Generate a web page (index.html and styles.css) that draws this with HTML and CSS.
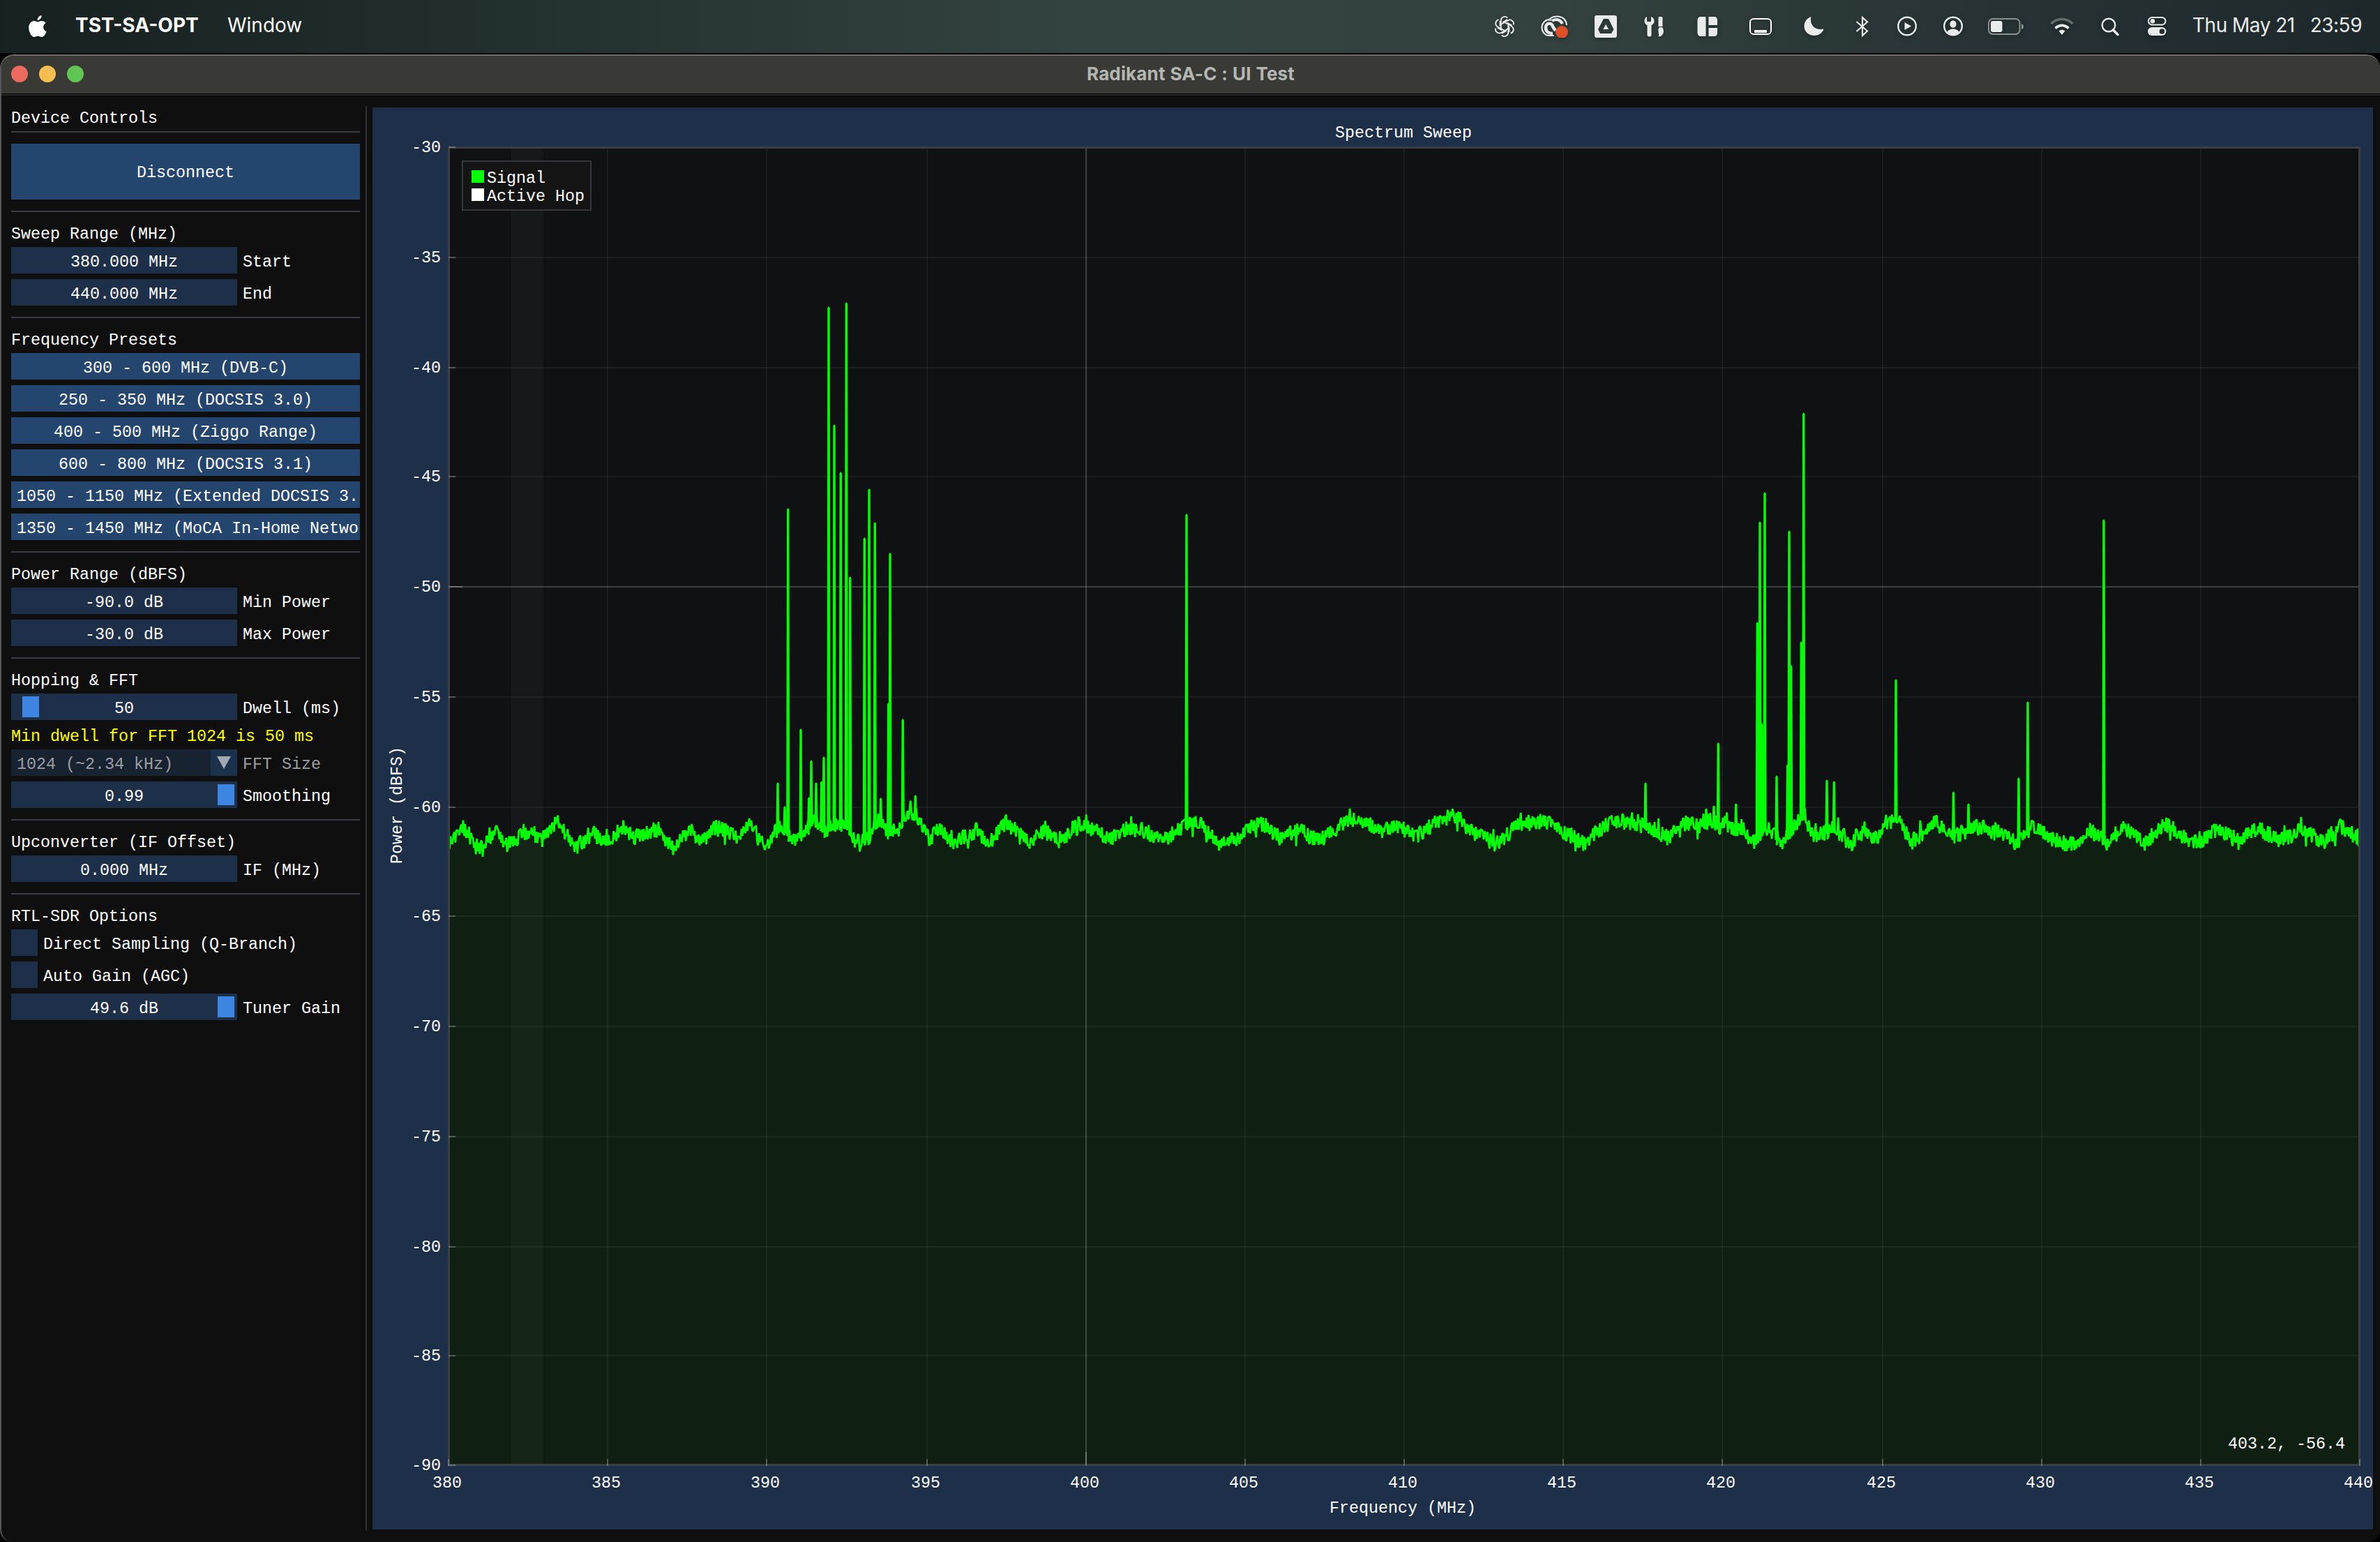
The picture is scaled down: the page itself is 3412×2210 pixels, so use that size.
FILE: index.html
```html
<!DOCTYPE html>
<html lang="en">
<head>
  <meta charset="UTF-8">
  <title>Radikant SA-C : UI Test</title>
  <link rel="stylesheet" href="styles.css">
</head>
<body>
  <!-- System menu bar -->
  <div class="menubar">
    <svg class="ic-apple" width="26" height="32" viewBox="0 0 26 32">
      <path d="M18.6 0c.3 3.300-2.600 7-6 7.100C12.200 3.900 15.300.500 18.600 0zM13 9.300c1.500 0 3-1.400 5.700-1.400 2.300 0 4.500 1.200 5.800 3.100-5 3.200-4.200 10 1.100 12.200-1.500 4.100-4 7.800-6.900 7.800-2.100 0-2.900-1.300-5.400-1.300S9.900 31 7.800 31C4.200 31 .200 23.900.200 18 .200 11.800 3.900 8 7.800 8c2.300 0 3.900 1.300 5.200 1.300z"/>
    </svg>
    <span class="app-name">TST-SA-OPT</span>
    <span class="menu-item">Window</span>
    <div class="status">
      <svg class="ic-knot" width="32" height="32" viewBox="-16 -16 32 32">
        <g fill="none" stroke="#e9ebea" stroke-width="1.900">
          <path id="petal" d="M-5.200 3V-8.500A5.500 5.500 0 0 1 4.200-12.400M4-9.800L-2-6.400V-5"/>
          <use href="#petal" transform="rotate(60)"/>
          <use href="#petal" transform="rotate(120)"/>
          <use href="#petal" transform="rotate(180)"/>
          <use href="#petal" transform="rotate(240)"/>
          <use href="#petal" transform="rotate(300)"/>
        </g>
      </svg>
      <svg class="ic-cloud" width="40" height="32" viewBox="0 0 40 32">
        <g fill="none" stroke="#e9ebea">
          <path stroke-width="2.200" d="M20 29H12A11 11.500 0 0 1 12 6.200c2 0 3 .300 4 .800M13 6.200C18-1 37-1 38 14"/>
          <path stroke-width="4.500" d="M18 26c-3 0-10-1-10-8C8 10 17 10 18 16l4 6"/>
          <path stroke-width="4" d="M17 8c5-4 12-2 15 4"/>
        </g>
        <circle cx="31" cy="24" r="9" fill="#df5027"/>
      </svg>
      <svg class="ic-box" width="32" height="32" viewBox="0 0 32 32">
        <path fill-rule="evenodd" d="M3 0h26a3 3 0 0 1 3 3v26a3 3 0 0 1-3 3H3a3 3 0 0 1-3-3V3a3 3 0 0 1 3-3zM13 5L5 20l3 6h16l3.500-6L20 5zM16.200 13l4 7h-8z"/>
      </svg>
      <svg class="ic-tools" width="30" height="32" viewBox="0 0 30 32">
        <path d="M4 2v7h6V2c3 1 4.500 3.500 4.500 6.500 0 2.500-1.500 4.500-4 5.800V28a3 2.500 0 0 1-6 0V14.300C2 13 .500 11 .500 8.500.500 5.500 1.500 3 4 2zM20.500 4c0-3 6-3 6 0v12h-6zM22 17h4c3 4 2.500 10-1.500 12.500-1.500 1-3 1-4 .500C22.500 26 18 21 22 17z"/>
      </svg>
      <svg class="ic-layout" width="30" height="32" viewBox="0 0 30 32">
        <path d="M5 2h7.500v28H5a4.500 4.500 0 0 1-4.500-4.500v-19A4.500 4.500 0 0 1 5 2zM16.500 2H25a4 4.500 0 0 1 4 4.500V14H16.500zM16.500 18H29v7.500a4 4.500 0 0 1-4 4.500h-8.500z"/>
      </svg>
      <svg class="ic-dock" width="32" height="32" viewBox="0 0 32 32">
        <rect x="1" y="5" width="30" height="22" rx="5" fill="none" stroke="#fff" stroke-width="2"/>
        <rect x="7" y="21" width="18" height="4" rx="1" fill="#fff"/>
      </svg>
      <svg class="ic-moon" width="30" height="32" viewBox="0 0 30 32">
        <path d="M10.500 2C8 11 14 22.500 28.500 19.500 27 25 21.500 29 15 29 7 29 .500 23.500.500 15.500.500 9 4.500 4 10.500 2z"/>
      </svg>
      <svg class="ic-bt" width="20" height="32" viewBox="0 0 20 32">
        <path fill="none" stroke="#e9ebea" stroke-width="2.200" d="M1.500 9L17 22.500 10 29V3l7 6.500L1.500 23"/>
      </svg>
      <svg class="ic-play" width="28" height="32" viewBox="0 0 28 32">
        <circle cx="14" cy="15.500" r="12.800" fill="none" stroke="#e9ebea" stroke-width="2.400"/>
        <path d="M10.500 10l9.500 5.500-9.500 5.500z"/>
      </svg>
      <svg class="ic-user" width="28" height="32" viewBox="0 0 28 32">
        <circle cx="14" cy="15.500" r="12.800" fill="none" stroke="#e9ebea" stroke-width="2.400"/>
        <ellipse cx="14" cy="12.500" rx="4.600" ry="5.300"/>
        <path d="M5.500 24c2-6 15-6 17 0-4 5.500-13 5.500-17 0z"/>
      </svg>
      <svg class="ic-battery" width="52" height="32" viewBox="0 0 52 32">
        <rect x="1" y="5" width="44.500" height="22" rx="6" fill="none" stroke="#8b9391" stroke-width="2"/>
        <rect x="4" y="8" width="16.500" height="16" rx="3"/>
        <path fill="#8b9391" d="M48 12c4 1.500 4 7 0 8z"/>
      </svg>
      <svg class="ic-wifi" width="34" height="32" viewBox="0 0 34 32">
        <g fill="none" stroke-width="3.800">
          <path stroke="#5f6a69" d="M1.500 12.200c9-9 22-9 31 0"/>
          <path stroke="#e9ebea" d="M7.500 18.500c6-5.500 13-5.500 19 0"/>
        </g>
        <path d="M12.500 22.500c3-2.500 6-2.500 9 0L17 28z"/>
      </svg>
      <svg class="ic-search" width="28" height="32" viewBox="0 0 28 32">
        <circle cx="11" cy="14" r="9.300" fill="none" stroke="#e9ebea" stroke-width="2.400"/>
        <path stroke="#e9ebea" stroke-width="3.600" stroke-linecap="round" d="M17.500 21l6.500 6.500"/>
      </svg>
      <svg class="ic-control" width="28" height="32" viewBox="0 0 28 32">
        <rect x="2" y="3" width="24.500" height="10.500" rx="5.200" fill="none" stroke="#e9ebea" stroke-width="2"/>
        <circle cx="8" cy="8.300" r="3.300"/>
        <rect x="1" y="17" width="26.500" height="12" rx="6"/>
        <circle cx="21.500" cy="23" r="3.800" fill="#243031"/>
      </svg>
      <div class="clock"><span>Thu May 21</span><span>23:59</span></div>
    </div>
  </div>

  <div class="window">
    <div class="titlebar">
      <div class="lights">
        <i class="light red"></i><i class="light yellow"></i><i class="light green"></i>
      </div>
      <div class="window-title">Radikant SA-C : UI Test</div>
    </div>

    <div class="content">
      <!-- Left control panel -->
      <div class="panel">
        <div class="text">Device Controls</div>
        <div class="sep first"></div>
        <div class="btn big">Disconnect</div>
        <div class="sep"></div>

        <div class="text">Sweep Range (MHz)</div>
        <div class="row"><div class="field">380.000 MHz</div><div class="label">Start</div></div>
        <div class="row"><div class="field">440.000 MHz</div><div class="label">End</div></div>
        <div class="sep"></div>

        <div class="text">Frequency Presets</div>
        <div class="btn">300 - 600 MHz (DVB-C)</div>
        <div class="btn">250 - 350 MHz (DOCSIS 3.0)</div>
        <div class="btn">400 - 500 MHz (Ziggo Range)</div>
        <div class="btn">600 - 800 MHz (DOCSIS 3.1)</div>
        <div class="btn long">1050 - 1150 MHz (Extended DOCSIS 3.</div>
        <div class="btn long">1350 - 1450 MHz (MoCA In-Home Netwo</div>
        <div class="sep"></div>

        <div class="text">Power Range (dBFS)</div>
        <div class="row"><div class="field">-90.0 dB</div><div class="label">Min Power</div></div>
        <div class="row"><div class="field">-30.0 dB</div><div class="label">Max Power</div></div>
        <div class="sep"></div>

        <div class="text">Hopping &amp; FFT</div>
        <div class="row"><div class="field">50<i class="grab low"></i></div><div class="label">Dwell (ms)</div></div>
        <div class="text warn">Min dwell for FFT 1024 is 50 ms</div>
        <div class="row disabled">
          <div class="combo">
            <div class="combo-value">1024 (~2.34 kHz)</div>
            <div class="combo-arrow"><svg width="20" height="18" viewBox="0 0 20 18"><path d="M0 0h20L10 18z"/></svg></div>
          </div>
          <div class="label">FFT Size</div>
        </div>
        <div class="row"><div class="field">0.99<i class="grab high"></i></div><div class="label">Smoothing</div></div>
        <div class="sep"></div>

        <div class="text">Upconverter (IF Offset)</div>
        <div class="row"><div class="field">0.000 MHz</div><div class="label">IF (MHz)</div></div>
        <div class="sep"></div>

        <div class="text">RTL-SDR Options</div>
        <div class="row"><div class="check"></div><div class="label">Direct Sampling (Q-Branch)</div></div>
        <div class="row"><div class="check"></div><div class="label">Auto Gain (AGC)</div></div>
        <div class="row"><div class="field">49.6 dB<i class="grab high"></i></div><div class="label">Tuner Gain</div></div>
      </div>

      <div class="splitter"></div>

      <svg class="plot" id="plot" width="2868" height="2038" viewBox="534 154 2868 2038">
        <rect class="plot-bg" x="643" y="211" width="2740" height="1889"/>
        <rect class="hop" x="733" y="212" width="46" height="1887"/>
        <g id="grid"></g>
        <polygon class="fill" id="fill"/>
        <polyline class="trace" id="trace"/>
        <rect class="frame" x="643.500" y="211.500" width="2739" height="1888"/>
        <g id="ticks"></g>
        <g class="legend">
          <rect class="legend-box" x="663" y="231" width="184" height="70"/>
          <rect x="676" y="244" width="18" height="18" fill="#0f0"/>
          <rect x="676" y="270" width="18" height="18" fill="#fff"/>
          <text x="698" y="262">Signal</text>
          <text x="698" y="288">Active Hop</text>
        </g>
        <text x="1914" y="196.500">Spectrum Sweep</text>
        <text x="1906" y="2168">Frequency (MHz)</text>
        <text transform="translate(576 1238) rotate(-90)">Power (dBFS)</text>
        <text x="3194" y="2076">403.2, -56.4</text>
      </svg>
    </div>
  </div>

  <script>
    // axis ticks: pixel centres of the grid lines
    var xs = [643, 871, 1099, 1329, 1557, 1785, 2013, 2241, 2469, 2699, 2927, 3155, 3383];
    var ys = [211, 369, 527, 683, 841, 999, 1157, 1313, 1471, 1629, 1787, 1943, 2100];
    var grid = '', ticks = '';

    xs.forEach(function(x, i) {
      var major = i === 4;
      if (i > 0 && i < 12) grid += '<path class="' + (major ? 'major' : 'minor') + '" d="M' + x + ' 212V2099"/>';
      ticks += '<path class="tick" d="M' + x + ' 2101v-' + (major ? 20 : 10) + '"/>';
      ticks += '<text x="' + (x - 23) + '" y="2132">' + (380 + i * 5) + '</text>';
    });
    ys.forEach(function(y, i) {
      var major = i === 4;
      if (i > 0 && i < 12) grid += '<path class="' + (major ? 'major' : 'minor') + '" d="M644 ' + y + 'H3382"/>';
      ticks += '<path class="tick" d="M643 ' + y + 'h' + (major ? 20 : 10) + '"/>';
      ticks += '<text x="590" y="' + (y + 7) + '">' + (-30 - i * 5) + '</text>';
    });
    document.getElementById('grid').innerHTML = grid;
    document.getElementById('ticks').innerHTML = ticks;

    // noise floor: x, y pairs
    var floor = [643,1207, 654,1200, 664,1187, 671,1193, 682,1213, 693,1218, 700,1203, 711,1192, 721,1207, 734,1212,
      750,1193, 764,1193, 775,1205, 786,1193, 798,1177, 811,1193, 825,1213, 836,1207, 846,1188, 863,1208, 875,1203,
      893,1185, 911,1200, 929,1192, 943,1188, 964,1217, 979,1197, 991,1190, 1004,1208, 1025,1187, 1043,1190, 1060,1203,
      1073,1176, 1087,1201, 1100,1209, 1110,1193, 1123,1184, 1137,1204, 1153,1195, 1167,1173, 1180,1190, 1193,1184,
      1217,1184, 1223,1204, 1233,1209, 1247,1198, 1260,1173, 1273,1193, 1287,1190, 1297,1168, 1313,1168, 1323,1187,
      1333,1204, 1345,1187, 1353,1195, 1367,1206, 1380,1201, 1400,1190, 1418,1208, 1443,1178, 1475,1206, 1500,1190,
      1520,1206, 1545,1185, 1570,1188, 1590,1205, 1612,1187, 1640,1190, 1665,1205, 1690,1190, 1716,1176, 1745,1208,
      1775,1200, 1806,1176, 1835,1200, 1865,1190, 1890,1205, 1915,1188, 1945,1170, 1980,1190, 2005,1182, 2030,1200,
      2055,1182, 2083,1166, 2110,1192, 2145,1210, 2175,1182, 2215,1176, 2240,1190, 2270,1208, 2290,1190, 2318,1176,
      2345,1180, 2370,1188, 2390,1200, 2415,1180, 2440,1183, 2453,1176, 2467,1185, 2475,1174, 2483,1189, 2497,1185,
      2507,1203, 2518,1207, 2530,1185, 2540,1194, 2555,1207, 2567,1194, 2577,1178, 2587,1163, 2600,1198, 2613,1196,
      2628,1185, 2640,1198, 2653,1210, 2673,1189, 2690,1201, 2707,1185, 2720,1167, 2730,1185, 2740,1207, 2757,1194,
      2775,1178, 2800,1200, 2830,1185, 2860,1190, 2890,1208, 2915,1182, 2945,1205, 2975,1212, 2995,1190, 3020,1207,
      3045,1185, 3075,1207, 3105,1180, 3145,1210, 3180,1188, 3210,1207, 3235,1187, 3270,1205, 3300,1188, 3330,1207,
      3355,1185, 3383,1203];
    // carriers: x, top y
    var spikes = [1115,1123, 1125,1157, 1129.7,730, 1148,1046, 1159.7,1144, 1163,1091, 1170,1123, 1177.7,1121,
      1181,1086, 1188,441, 1196,610, 1205.3,678, 1213.3,435, 1218.7,828, 1239.3,772, 1246,702, 1254.3,750,
      1262.7,1145, 1273.7,1009, 1276,794, 1294.3,1032, 1312.3,1141, 1701,738, 2359,1123, 2446,1160, 2457,1156,
      2463.3,1066, 2488.7,1153, 2519.3,893, 2523,749, 2525.7,1038, 2530,707, 2547,1113, 2562.7,1097, 2565,762,
      2567.7,955, 2582.3,921, 2585.7,593, 2619,1119, 2629.3,1121, 2718,975, 2800.5,1136, 2822,1153, 2894,1116,
      2907,1007, 3016,746];

    var seed = 11;
    function rnd() {
      seed = (seed * 16807) % 2147483647;
      return seed / 2147483647;
    }

    var pts = [], f = 0, s = 0, side = 1;
    for (var x = 643; x <= 3382; x += 1.4) {
      while (f < floor.length - 4 && floor[f + 2] < x) f += 2;
      var t = (x - floor[f]) / (floor[f + 2] - floor[f]);
      var base = floor[f + 1] + (floor[f + 3] - floor[f + 1]) * t;
      // alternate above / below the floor so the band stays dense
      side = rnd() > 0.25 ? -side : side;
      var n = side * (2 + rnd() * 10);
      if (rnd() > 0.95) n *= 1.8;
      while (s < spikes.length && spikes[s] <= x) {
        pts.push((spikes[s] - 1.2) + ',' + (base + 4));
        pts.push((spikes[s] - 0.3) + ',' + spikes[s + 1]);
        pts.push((spikes[s] + 0.3) + ',' + spikes[s + 1]);
        pts.push((spikes[s] + 1.2) + ',' + (base + 6));
        s += 2;
      }
      pts.push(x.toFixed(1) + ',' + (base + n).toFixed(1));
    }
    document.getElementById('trace').setAttribute('points', pts.join(' '));
    document.getElementById('fill').setAttribute('points', '643,2099 ' + pts.join(' ') + ' 3383,2099');
  </script>
</body>
</html>
```
FILE: styles.css
```css
* {
  box-sizing: border-box;
}
body {
  margin: 0;
  width: 3412px;
  height: 2210px;
  display: flex;
  flex-direction: column;
  overflow: hidden;
  background: #000;
  color: #fff;
  font-family: "Liberation Mono", monospace;
  font-size: 23.333px;
}

/* Menu bar */
.menubar {
  height: 76px;
  margin-bottom: 2px;
  padding-left: 41px;
  padding-right: 26px;
  display: flex;
  align-items: center;
  background: linear-gradient(90deg, #17211f 0%, #1f2c29 16%, #33433f 45%, #33423f 65%, #293536 80%, #1d282b 100%);
  font-family: Inter, sans-serif;
  font-size: 28px;
  white-space: nowrap;
}
.menubar svg {
  display: block;
  fill: #e9ebea;
  filter: drop-shadow(0 2px 3px rgba(0,0,0,0.3));
}
.menubar .ic-apple {
  fill: #fff;
}
.app-name {
  width: 177px;
  margin-left: 41px;
  margin-top: -4px;
  font-weight: 700;
}
.menu-item {
  margin-left: 41px;
  margin-top: -4px;
}
.status {
  margin-left: auto;
  display: flex;
  align-items: center;
}
.ic-cloud { margin-left: 35px; }
.ic-box { margin-left: 38px; }
.ic-tools { margin-left: 39px; }
.ic-layout { margin-left: 46px; }
.ic-dock { margin-left: 45px; }
.ic-moon { margin-left: 46px; }
.ic-bt { margin-left: 44px; }
.ic-play { margin-left: 40px; }
.ic-user { margin-left: 38px; }
.ic-battery { margin-left: 36px; }
.ic-wifi { margin-left: 37px; }
.ic-search { margin-left: 39px; }
.ic-control { margin-left: 38px; }
.clock {
  width: 243px;
  margin-left: 37px;
  margin-top: -4px;
  display: flex;
  justify-content: space-between;
  color: #e9ebea;
  letter-spacing: -0.5px;
}

/* Window */
.window {
  flex: 1;
  display: flex;
  flex-direction: column;
  background: #0f0f0f;
  border-top: 2px solid #6d6f6c;
  border-left: 2px solid #55565a;
  border-radius: 20px 20px 18px 18px;
  overflow: hidden;
}
.titlebar {
  height: 55px;
  flex: none;
  display: grid;
  grid-template-columns: 200px 1fr 200px;
  align-items: center;
  background: #393a36;
  border-bottom: 1px solid #000;
  box-shadow: 0 2px 0 #262626;
}
.lights {
  display: flex;
  gap: 16px;
  padding-left: 14px;
  margin-top: -2px;
}
.light {
  width: 24px;
  height: 24px;
  border-radius: 50%;
}
.red { background: #ed6a5f; }
.yellow { background: #f5be4f; }
.green { background: #61c554; }
.window-title {
  text-align: center;
  margin-top: -4px;
  color: #b4b6b2;
  font-family: Inter, sans-serif;
  font-size: 26px;
  font-weight: 700;
  letter-spacing: 0.15px;
  word-spacing: 0.5px;
}
.content {
  flex: 1;
  display: flex;
  align-items: flex-start;
  padding-top: 19px;
}

/* Control panel */
.panel {
  width: 522px;
  padding-left: 14px;
  padding-right: 8px;
  display: flex;
  flex-direction: column;
  gap: 8px;
  white-space: pre;
}
.text {
  height: 26px;
  line-height: 32px;
}
.warn {
  color: #ff0;
}
.sep {
  height: 2px;
  margin: 8px 0;
  background: #3d3d45;
}
.sep.first {
  margin-top: 0;
}
.btn {
  height: 38px;
  line-height: 44px;
  text-align: center;
  background: #24456d;
}
.btn.big {
  height: 80px;
  line-height: 84px;
}
.btn.long {
  padding-left: 8px;
  text-align: left;
}
.row {
  display: flex;
  gap: 8px;
  height: 38px;
  line-height: 44px;
}
.field {
  position: relative;
  width: 324px;
  text-align: center;
  background: #1e2f49;
}
.grab {
  position: absolute;
  top: 4px;
  width: 24px;
  height: 30px;
  background: #3d85e0;
}
.grab.low { left: 16px; }
.grab.high { right: 4px; }
.combo {
  width: 324px;
  display: flex;
  background: #182332;
}
.combo-value {
  flex: 1;
  padding-left: 8px;
}
.combo-arrow {
  width: 38px;
  display: flex;
  align-items: center;
  justify-content: center;
  background: #1c314b;
}
.combo-arrow svg {
  fill: #a2a9b2;
}
.disabled {
  color: #9c9fa2;
}
.check {
  width: 38px;
  background: #1e2f49;
}
.splitter {
  width: 2px;
  height: 2042px;
  margin-top: -2px;
  margin-right: 8px;
  background: #313136;
}

/* Plot */
.plot {
  display: block;
  flex: none;
  background: #1e2f49;
}
.plot text {
  fill: #fff;
  white-space: pre;
}
.plot-bg { fill: #101113; }
.hop { fill: rgba(255,255,255,0.03); }
.minor, .major, .tick {
  stroke: #fff;
  stroke-width: 2;
}
.minor { stroke-opacity: 0.05; }
.major { stroke-opacity: 0.2; }
.tick { stroke-opacity: 0.25; }
.fill { fill: rgba(0,255,0,0.06); }
.trace {
  fill: none;
  stroke: #0f0;
  stroke-width: 2.8;
  stroke-linejoin: bevel;
}
.frame {
  fill: none;
  stroke: #3b3e45;
  stroke-width: 3;
}
.legend-box {
  fill: #141414;
  stroke: #35353b;
  stroke-width: 2;
}
```
